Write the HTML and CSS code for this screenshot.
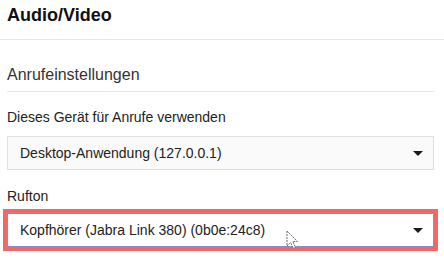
FILE: index.html
```html
<!DOCTYPE html>
<html lang="de">
<head>
<meta charset="utf-8">
<title>Audio/Video</title>
<link rel="stylesheet" href="styles.css">
</head>
<body>
<div class="page">
  <div class="header">Audio/Video</div>
  <div class="content">
    <div class="section-title">Anrufeinstellungen</div>
    <div class="field first">
      <div class="field-label">Dieses Gerät für Anrufe verwenden</div>
      <div class="select">
        <span class="select-text">Desktop-Anwendung (127.0.0.1)</span>
        <span class="caret"></span>
      </div>
    </div>
    <div class="field second">
      <div class="field-label">Rufton</div>
      <div class="select highlighted">
        <span class="select-text">Kopfhörer (Jabra Link 380) (0b0e:24c8)</span>
        <span class="caret"></span>
        <svg class="cursor" width="14" height="20" viewBox="0 0 14 20">
          <path d="M1 1 L1 16 L4.5 12.5 L7.5 18.5 L9.5 17.5 L6.8 11.5 L11.5 11.5 Z" fill="#fff" stroke="#6a6a6a" stroke-width="1" stroke-dasharray="2 1"/>
        </svg>
      </div>
    </div>
  </div>
</div>
</body>
</html>
```
FILE: styles.css
```css
html, body {
  margin: 0;
  padding: 0;
  background: #ffffff;
}
body {
  font-family: "Liberation Sans", Arial, sans-serif;
  color: #222222;
}
.page {
  min-height: 258px;
  padding-bottom: 12px;
  box-sizing: border-box;
}
.header {
  box-sizing: border-box;
  height: 40px;
  padding: 4px 7px 0;
  font-size: 18px;
  line-height: 22px;
  font-weight: bold;
  color: #111111;
  border-bottom: 1px solid #e6e6e6;
}
.content {
  padding: 0 10px 0 7px;
}
.section-title {
  margin-top: 25px;
  font-size: 16px;
  line-height: 20px;
  padding-bottom: 6px;
  color: #333333;
  border-bottom: 1px solid #e6e6e6;
}
.field.first {
  margin-top: 17px;
}
.field.second {
  margin-top: 18px;
}
.field-label {
  font-size: 14px;
  line-height: 17px;
  margin-bottom: 10px;
  color: #222222;
}
.field.second .field-label {
  margin-bottom: 8px;
}
.select {
  position: relative;
  box-sizing: border-box;
  height: 34px;
  display: flex;
  align-items: center;
  padding: 0 10px 0 12px;
  border: 1px solid #e0e0e0;
  background: #fafafa;
  font-size: 14px;
  color: #222222;
}
.select-text {
  flex: 1;
  white-space: nowrap;
}
.caret {
  width: 0;
  height: 0;
  border-left: 5px solid transparent;
  border-right: 5px solid transparent;
  border-top: 5px solid #1a1a1a;
  margin-top: 1px;
}
.select.highlighted {
  background: #ffffff;
  border-color: #8c8ccc;
  outline: 4px solid #f06868;
}
.cursor {
  position: absolute;
  left: 278px;
  top: 16px;
}
```
